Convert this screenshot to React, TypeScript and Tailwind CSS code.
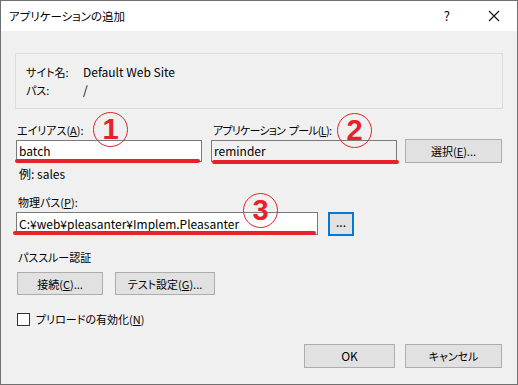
import React from 'react'

const FONT = { fontFamily: '"Noto Sans CJK JP", "Noto Sans", sans-serif' }

function Circled({ n, x, y }: { n: string; x: number; y: number }) {
  // red hand-drawn annotation number
  return (
    <div
      className="absolute w-[35px] h-[35px] rounded-full border-[1.5px] border-[#e8202a] flex items-center justify-center text-[#e8202a] text-[29px] font-bold leading-none"
      style={{ left: x, top: y, fontFamily: '"Liberation Sans", Arial, sans-serif' }}
    >
      {n}
    </div>
  )
}

function RedLine({ x, y, w }: { x: number; y: number; w: number }) {
  return <div className="absolute h-[4px] rounded-full bg-[#e8202a]" style={{ left: x, top: y, width: w }} />
}

function Btn({ children, w }: { children: React.ReactNode; w: string }) {
  return (
    <button className={`${w} h-[23px] bg-[#e1e1e1] border border-[#adadad] text-[11px] text-black flex items-center justify-center`}>
      {children}
    </button>
  )
}

export default function App() {
  return (
    <div className='relative w-[518px] h-[385px] border border-[#707070] bg-[#f0f0f0] text-black text-[12px] leading-[18px] overflow-hidden [font-feature-settings:"palt"]' style={FONT}>
      {/* Title bar */}
      <div className="h-[30px] bg-white flex items-center pl-[8px]">
        <span className="text-[11.5px]">アプリケーションの追加</span>
        <span className="ml-auto mr-[38px] text-[13px]">?</span>
        <svg width="12" height="12" viewBox="0 0 12 12" className="mr-[17px]">
          <path d="M1 1L11 11M11 1L1 11" stroke="#111" strokeWidth="1.1" />
        </svg>
      </div>

      <div className="px-[14px]">
        {/* Site info */}
        <div className="mt-[22px] h-[56px] border border-[#dcdcdc] pl-[10px] pt-[9px]">
          <div className="flex">
            <span className="w-[57px] text-[11px]">サイト名:</span>
            <span>Default Web Site</span>
          </div>
          <div className="flex">
            <span className="w-[57px] text-[11px]">パス:</span>
            <span>/</span>
          </div>
        </div>

        {/* Alias / pool */}
        <div className="mt-[12px] flex text-[11px]">
          <div className="w-[187px] pl-[2px]">
            エイリアス(<span className="underline">A</span>):
          </div>
          <div className="pl-[11px] tracking-[-0.8px] flex">
            <span>アプリケーション</span>
            <span className="ml-[4px]">
              プール(<span className="underline">L</span>):
            </span>
          </div>
        </div>
        <div className="flex items-center h-[24px] pl-[1px]">
          <div className="w-[186px] h-[22px] bg-white border border-[#7a7a7a] pl-[2px] flex items-center">batch</div>
          <div className="ml-[9px] w-[186px] h-[22px] bg-[#f0f0f0] border border-[#7a7a7a] pl-[2px] flex items-center">reminder</div>
          <button className="ml-[8px] w-[97px] h-[24px] bg-[#e1e1e1] border border-[#adadad] flex items-center justify-center text-[11px]">
            選択(<span className="underline">E</span>)...
          </button>
        </div>
        <div className="mt-[2px] pl-[4px]">例: sales</div>

        {/* Physical path */}
        <div className="mt-[10px] pl-[3px] text-[11px]">
          物理パス(<span className="underline">P</span>):
        </div>
        <div className="mt-[1px] flex items-start h-[24px] pl-[1px]">
          <div className="w-[302px] h-[23px] bg-white border border-[#7a7a7a] pl-[2px] flex items-center">C:¥web¥pleasanter¥Implem.Pleasanter</div>
          <button className="ml-[10px] w-[26px] h-[24px] bg-[#e1e1e1] border-2 border-[#0078d7] flex items-center justify-center leading-none pb-[4px]">
            ...
          </button>
        </div>

        {/* Pass-through */}
        <div className="mt-[12px] pl-[3px] text-[11px]">パススルー認証</div>
        <div className="mt-[6px] flex gap-[12px] pl-[2px]">
          <Btn w="w-[86px]">
            接続(<span className="underline">C</span>)...
          </Btn>
          <Btn w="w-[100px]">
            テスト設定(<span className="underline">G</span>)...
          </Btn>
        </div>

        <div className="mt-[15px] flex items-center pl-[2px]">
          <div className="w-[13px] h-[13px] bg-white border border-[#333]" />
          <span className="ml-[6px] text-[11px]">
            プリロードの有効化(<span className="underline">N</span>)
          </span>
        </div>

        <div className="mt-[16px] flex justify-end gap-[10px] pr-[1px]">
          <button className="w-[91px] h-[24px] bg-[#e1e1e1] border border-[#adadad]">OK</button>
          <button className="w-[97px] h-[24px] bg-[#e1e1e1] border border-[#adadad] text-[11px]">キャンセル</button>
        </div>
      </div>

      {/* Annotations */}
      <RedLine x={14} y={158} w={185} />
      <RedLine x={211} y={159} w={187} />
      <RedLine x={12} y={230} w={303} />
      <Circled n="1" x={92} y={111} />
      <Circled n="2" x={336} y={112} />
      <Circled n="3" x={242} y={192} />
    </div>
  )
}
